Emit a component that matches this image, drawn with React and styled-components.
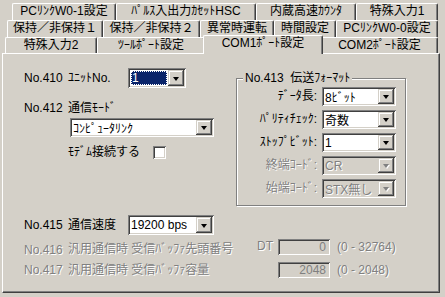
import React from "react";
import styled, { createGlobalStyle, css } from "styled-components";

const GlobalStyle = createGlobalStyle`
  html, body {
    margin: 0;
    padding: 0;
    background: #d4d0c8;
  }
  body {
    font-family: "Liberation Sans", "Noto Sans CJK JP", sans-serif;
    font-size: 12px;
    color: #000;
  }
`;

const disabledText = css`
  color: #808080;
  text-shadow: 1px 1px 0 #fff;
`;

const sunken = css`
  box-shadow: inset 1px 1px 0 #808080, inset -1px -1px 0 #fff,
    inset 2px 2px 0 #404040, inset -2px -2px 0 #d4d0c8;
`;

const Window = styled.div`
  width: 445px;
  height: 297px;
  box-sizing: border-box;
  padding: 3px 5px 0 2px;
  overflow: hidden;
`;

const TabStrip = styled.div`
  display: flex;
  flex-direction: column;
`;

const TabRow = styled.div`
  display: flex;
  height: ${(p) => p.$h}px;
  padding-left: ${(p) => p.$indent}px;
`;

const Tab = styled.div`
  width: ${(p) => p.$w}px;
  flex: none;
  box-sizing: border-box;
  height: 100%;
  border-left: 1px solid #fff;
  border-top: 1px solid #fff;
  border-right: 1px solid #404040;
  border-top-left-radius: 2px;
  border-top-right-radius: 2px;
  box-shadow: inset -1px 0 0 #808080;
  background: #d4d0c8;
  text-align: center;
  line-height: 15px;
  white-space: nowrap;

  ${(p) =>
    p.$active &&
    css`
      position: relative;
      z-index: 2;
      width: ${p.$w + 4}px;
      height: calc(100% + 3px);
      margin: -2px -2px -1px -2px;
    `}
`;

const Panel = styled.div`
  position: relative;
  z-index: 1;
  width: 438px;
  height: 240px;
  box-sizing: border-box;
  border-top: 1px solid #fff;
  border-left: 1px solid #fff;
  border-right: 1px solid #404040;
  border-bottom: 1px solid #404040;
  box-shadow: inset -1px -1px 0 #808080;
  padding-left: 21px;
`;

const TopSection = styled.div`
  display: flex;
  align-items: flex-start;
  margin-top: 14px;
`;

const LeftCol = styled.div`
  width: 212px;
  display: flex;
  flex-direction: column;
`;

const Row = styled.div`
  display: flex;
  align-items: ${(p) => p.$align || "center"};
  height: ${(p) => p.$h || 20}px;
  margin-top: ${(p) => p.$mt || 0}px;
  margin-left: ${(p) => p.$ml || 0}px;
`;

const Text = styled.span`
  flex: none;
  white-space: pre;
  line-height: 15px;
  width: ${(p) => (p.$w ? `${p.$w}px` : "auto")};
  text-align: ${(p) => (p.$right ? "right" : "left")};
  margin-left: ${(p) => p.$ml || 0}px;
  margin-top: ${(p) => p.$mt || 0}px;
  ${(p) => p.$disabled && disabledText}
`;

const ComboBox = styled.div`
  flex: none;
  width: ${(p) => p.$w}px;
  height: ${(p) => p.$h || 20}px;
  margin-left: ${(p) => p.$ml || 0}px;
  box-sizing: border-box;
  padding: 2px;
  display: flex;
  background: ${(p) => (p.$disabled ? "#d4d0c8" : "#fff")};
  ${sunken}
`;

const ComboText = styled.div`
  flex: 1;
  min-width: 0;
  box-sizing: border-box;
  padding-left: 1px;
  display: flex;
  align-items: center;
  white-space: nowrap;
  ${(p) => p.$disabled && disabledText}
  ${(p) =>
    p.$focused &&
    css`
      margin: 1px;
      background: #0a246a;
      color: #fff;
      outline: 1px dotted #fff;
      outline-offset: -1px;
    `}
`;

const DropButton = styled.div`
  width: 16px;
  flex: none;
  background: #d4d0c8;
  display: flex;
  align-items: center;
  justify-content: center;
  box-shadow: inset -1px -1px 0 #404040, inset 1px 1px 0 #d4d0c8,
    inset -2px -2px 0 #808080, inset 2px 2px 0 #fff;
`;

const Arrow = styled.div`
  width: 0;
  height: 0;
  border-left: 3.5px solid transparent;
  border-right: 3.5px solid transparent;
  border-top: 4px solid ${(p) => (p.$disabled ? "#808080" : "#000")};
  margin-top: 1px;
  ${(p) => p.$disabled && css`filter: drop-shadow(1px 1px 0 #fff);`}
`;

const Checkbox = styled.div`
  flex: none;
  width: 13px;
  height: 13px;
  box-sizing: border-box;
  background: #fff;
  ${sunken}
`;

const GroupBox = styled.div`
  position: relative;
  width: 170px;
  height: 128px;
  box-sizing: border-box;
  margin-top: 10px;
  border: 1px solid #808080;
  box-shadow: inset 1px 1px 0 #fff, 1px 1px 0 #fff;
  padding-top: 8px;
  display: flex;
  flex-direction: column;
  gap: 4px;
`;

const GroupCaption = styled.span`
  position: absolute;
  top: -8px;
  left: 6px;
  padding: 0 2px;
  background: #d4d0c8;
  line-height: 15px;
  white-space: pre;
`;

const BottomSection = styled.div`
  display: flex;
  flex-direction: column;
  margin-top: 9px;
`;

const ValueField = styled.div`
  flex: none;
  width: 52px;
  height: 16px;
  box-sizing: border-box;
  padding-right: 4px;
  display: flex;
  align-items: center;
  justify-content: flex-end;
  color: #808080;
  background: #d4d0c8;
  ${sunken}
`;

const Combo = ({ w, h, ml, value, disabled, focused }) => (
  <ComboBox $w={w} $h={h} $ml={ml} $disabled={disabled}>
    <ComboText $disabled={disabled} $focused={focused}>
      {value}
    </ComboText>
    <DropButton>
      <Arrow $disabled={disabled} />
    </DropButton>
  </ComboBox>
);

const tabRows = [
  {
    indent: 10,
    h: 17,
    tabs: [
      ["PCﾘﾝｸW0-1設定", 104],
      ["ﾊﾟﾙｽ入出力ｶｾｯﾄHSC", 140],
      ["内蔵高速ｶｳﾝﾀ", 100],
      ["特殊入力1", 82],
    ],
  },
  {
    indent: 5,
    h: 17,
    tabs: [
      ["保持／非保持１", 96],
      ["保持／非保持２", 97],
      ["異常時運転", 74],
      ["時間設定", 62],
      ["PCﾘﾝｸW0-0設定", 102],
    ],
  },
  {
    indent: 3,
    h: 16,
    tabs: [
      ["特殊入力2", 92],
      ["ﾂｰﾙﾎﾟｰﾄ設定", 108],
      ["COM1ﾎﾟｰﾄ設定", 116, true],
      ["COM2ﾎﾟｰﾄ設定", 117],
    ],
  },
];

const formatRows = [
  ["ﾃﾞｰﾀ長:", "8ﾋﾞｯﾄ", false],
  ["ﾊﾟﾘﾃｨﾁｪｯｸ:", "奇数", false],
  ["ｽﾄｯﾌﾟﾋﾞｯﾄ:", "1", false],
  ["終端ｺｰﾄﾞ:", "CR", true],
  ["始端ｺｰﾄﾞ:", "STX無し", true],
];

export default function App() {
  return (
    <>
      <GlobalStyle />
      <Window>
        <TabStrip>
          {tabRows.map((row, i) => (
            <TabRow key={i} $indent={row.indent} $h={row.h}>
              {row.tabs.map(([label, w, active]) => (
                <Tab key={label} $w={w} $active={active}>
                  {label}
                </Tab>
              ))}
            </TabRow>
          ))}
        </TabStrip>

        <Panel>
          <TopSection>
            <LeftCol>
              <Row>
                <Text $w={44}>No.410</Text>
                <Text $w={60}>ﾕﾆｯﾄNo.</Text>
                <Combo w={58} value="1" focused />
              </Row>
              <Row $h={16} $mt={12}>
                <Text $w={44}>No.412</Text>
                <Text>通信ﾓｰﾄﾞ</Text>
              </Row>
              <Row $h={19} $mt={2} $ml={46}>
                <Combo w={144} h={19} value="ｺﾝﾋﾟｭｰﾀﾘﾝｸ" />
              </Row>
              <Row $h={16} $mt={7} $ml={44}>
                <Text $w={85}>ﾓﾃﾞﾑ接続する</Text>
                <Checkbox />
              </Row>
            </LeftCol>

            <GroupBox>
              <GroupCaption>{"No.413  伝送ﾌｫｰﾏｯﾄ"}</GroupCaption>
              {formatRows.map(([label, value, disabled]) => (
                <Row key={label} $h={19}>
                  <Text $w={80} $right $disabled={disabled}>
                    {label}
                  </Text>
                  <Combo w={74} h={19} ml={5} value={value} disabled={disabled} />
                </Row>
              ))}
            </GroupBox>
          </TopSection>

          <BottomSection>
            <Row>
              <Text $w={44}>No.415</Text>
              <Text $w={60}>通信速度</Text>
              <Combo w={86} value="19200 bps" />
            </Row>
            <Row $h={18} $mt={4} $align="flex-start">
              <Text $w={44} $mt={4} $disabled>
                No.416
              </Text>
              <Text $w={189} $mt={3} $disabled>
                汎用通信時 受信ﾊﾞｯﾌｧ先頭番号
              </Text>
              <Text $w={21} $disabled>
                DT
              </Text>
              <ValueField>0</ValueField>
              <Text $ml={7} $mt={1} $disabled>
                (0 - 32764)
              </Text>
            </Row>
            <Row $h={16} $mt={5}>
              <Text $w={44} $disabled>
                No.417
              </Text>
              <Text $w={210} $disabled>
                汎用通信時 受信ﾊﾞｯﾌｧ容量
              </Text>
              <ValueField>2048</ValueField>
              <Text $ml={7} $disabled>
                (0 - 2048)
              </Text>
            </Row>
          </BottomSection>
        </Panel>
      </Window>
    </>
  );
}
